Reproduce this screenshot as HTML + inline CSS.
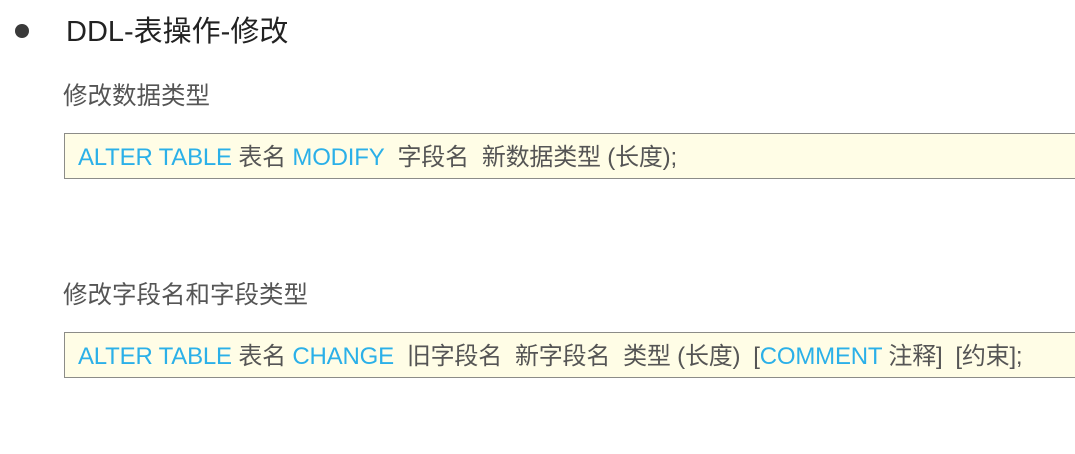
<!DOCTYPE html>
<html><head><meta charset="utf-8"><style>
body{margin:0;width:1075px;height:454px;background:#fff;position:relative;overflow:hidden;font-family:"Liberation Sans","Noto Sans CJK SC",sans-serif;}
.dot{position:absolute;left:15px;top:24px;width:14px;height:14px;border-radius:50%;background:#3a3a3a;}
.t{position:absolute;white-space:nowrap;line-height:1;}
.h{left:66px;top:18px;font-size:29px;color:#222;}
.s{left:63px;font-size:24.5px;color:#555;}
.box{position:absolute;left:64px;width:1020px;height:44px;border:1px solid #8c8c88;background:#fffde6;}
.c{position:absolute;left:13px;top:12px;font-size:24px;line-height:1;color:#555;white-space:nowrap;letter-spacing:-0.2px;}
.k{color:#2bb0e8;}
</style></head><body>
<div class="dot"></div>
<div class="t h">DDL-表操作-修改</div>
<div class="t s" style="top:85px">修改数据类型</div>
<div class="box" style="top:133px"><div class="c"><span class="k">ALTER TABLE</span> 表名 <span class="k">MODIFY</span>&nbsp; 字段名&nbsp; 新数据类型 (长度);</div></div>
<div class="t s" style="top:284px">修改字段名和字段类型</div>
<div class="box" style="top:332px"><div class="c"><span class="k">ALTER TABLE</span> 表名 <span class="k">CHANGE</span>&nbsp; 旧字段名&nbsp; 新字段名&nbsp; 类型 (长度)&nbsp; [<span class="k">COMMENT</span> 注释]&nbsp; [约束];</div></div>
</body></html>
